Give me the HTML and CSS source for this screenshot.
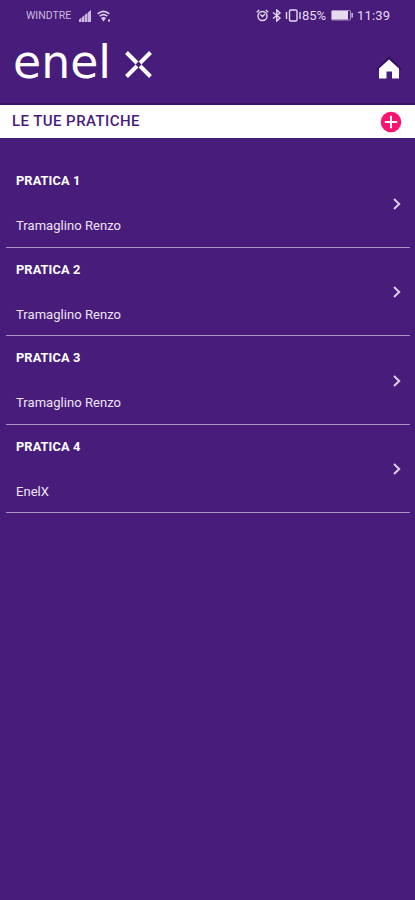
FILE: index.html
```html
<!DOCTYPE html>
<html lang="it">
<head>
<meta charset="utf-8">
<meta name="viewport" content="width=device-width">
<title>Le tue pratiche</title>
<link rel="stylesheet" href="styles.css">
</head>
<body>
<div class="status">
  <span class="carrier">WINDTRE</span>
  <svg class="signal" width="13" height="12" viewBox="0 0 13 12"><path d="M0 12V9.500L2.500 7.500V12zM3 12V7.200L5.500 5V12zM6 12V4.700L8.500 2.700V12zM9 12V2.300L12 0V12z"/></svg>
  <svg class="wifi" width="14" height="12" viewBox="0 0 14 12"><g fill="none" stroke="currentColor" stroke-width="1.6"><path d="M.7 3.800Q6.500-1 12.300 3.800M2.700 6.200Q6.500 3 10.300 6.200"/></g><path d="M4 8Q6.500 6 9 8L6.500 11.500zM11 9.500h2v2h-2z"/></svg>
  <span class="spacer"></span>
  <svg class="line alarm" width="13" height="13" viewBox="0 0 13 13"><circle cx="6.500" cy="7" r="4.500"/><path d="M.7 3.300L3.300 1M12.300 3.300L9.700 1M4.300 5.500L6.500 7.500L9 5"/></svg>
  <svg class="line bluetooth" width="10" height="13" viewBox="0 0 10 13"><path d="M1 3.500L8 9L4.800 12V1L8 4L1 9.500"/></svg>
  <svg class="line vibrate" width="17" height="13" viewBox="0 0 17 13"><rect x="4.500" y="1" width="7.500" height="11" rx="1.200"/><path d="M1.500 3v7M15 3v7"/></svg>
  <span class="percent">85%</span>
  <svg class="battery" width="23" height="11" viewBox="0 0 23 11"><rect x=".5" y=".5" width="19" height="9.500" rx="1" fill="none" stroke="currentColor" stroke-opacity=".6"/><path d="M1 1h16v8.500H1zM20.500 3h1.300v4.500h-1.300z"/></svg>
  <span class="clock">11:39</span>
</div>
<header class="brand">
  <svg class="logo" width="144" height="44" viewBox="0 0 144 44" role="img" aria-label="enel x">
    <text x="-1" y="38" textLength="98" lengthAdjust="spacingAndGlyphs">enel</text>
    <path class="mark" d="M112.500 12.500L123 23M136.500 12.500L126 23M112.500 36.500L123 26M136.500 36.500L126 26"/>
  </svg>
  <svg class="home" width="30" height="28" viewBox="0 0 30 28"><path class="roof" d="M3 16L15 3.500L27 16"/><path d="M15 5.500L25 14.500V24.500H18V17.500H12.500V24.500H5V14.500z"/></svg>
</header>
<div class="heading">
  <h1>LE TUE PRATICHE</h1>
  <svg class="add" width="22" height="22" viewBox="0 0 22 22"><circle cx="11" cy="11" r="10.300"/><path d="M11 4.800v12.400M4.800 11h12.400"/></svg>
</div>
<main class="list">
  <section class="item"><div><h2>PRATICA 1</h2><p>Tramaglino Renzo</p></div><svg class="chevron" width="10" height="12" viewBox="0 0 10 12"><path d="M2 1L7.200 6L2 11"/></svg></section>
  <section class="item"><div><h2>PRATICA 2</h2><p>Tramaglino Renzo</p></div><svg class="chevron" width="10" height="12" viewBox="0 0 10 12"><path d="M2 1L7.200 6L2 11"/></svg></section>
  <section class="item"><div><h2>PRATICA 3</h2><p>Tramaglino Renzo</p></div><svg class="chevron" width="10" height="12" viewBox="0 0 10 12"><path d="M2 1L7.200 6L2 11"/></svg></section>
  <section class="item"><div><h2>PRATICA 4</h2><p>EnelX</p></div><svg class="chevron" width="10" height="12" viewBox="0 0 10 12"><path d="M2 1L7.200 6L2 11"/></svg></section>
</main>
</body>
</html>
```
FILE: styles.css
```css
* { box-sizing: border-box; margin: 0; padding: 0; }
body {
  min-height: 900px;
  background: #481c7b;
  color: #fff;
  font-family: Roboto, "Liberation Sans", sans-serif;
}
svg { display: block; flex: none; fill: currentColor; }
.status {
  display: flex;
  align-items: center;
  height: 31px;
  padding: 0 24px 0 26px;
  color: #e6daf1;
  white-space: nowrap;
}
.carrier { width: 53px; font-size: 10.5px; color: #cbb9de; }
.signal { color: #cbb9de; margin-right: 5px; }
.wifi { color: #dccfea; }
.spacer { flex: 1; }
.line { fill: none; stroke: currentColor; stroke-width: 1.4; }
.bluetooth { margin-left: 3px; }
.vibrate { margin-left: 3px; }
.percent { width: 28px; font-size: 13px; }
.battery { margin-left: 1px; }
.clock { width: 34px; margin-left: 3px; font-size: 13px; letter-spacing: .2px; }
.brand {
  display: flex;
  justify-content: space-between;
  align-items: flex-start;
  height: 74px;
  padding: 9px 11px 0 14px;
  border-bottom: 2px solid #381466;
}
.logo { overflow: visible; }
.logo text { font-family: "DejaVu Sans", sans-serif; font-size: 46.5px; }
.mark { fill: none; stroke: #fff; stroke-width: 4; }
.home { margin-top: 14px; }
.roof { fill: none; stroke: #33105f; stroke-width: 2; }
.heading {
  display: flex;
  justify-content: space-between;
  align-items: center;
  height: 33px;
  padding: 0 13px 0 12px;
  background: #fff;
  color: #481c7b;
}
h1 { font-size: 15px; font-weight: 500; letter-spacing: .43px; line-height: 18px; margin-top: -1px; }
.add circle { fill: #f91472; }
.add path { fill: none; stroke: #fff; stroke-width: 2; }
.list { padding: 21px 5px 0 6px; }
.item {
  display: flex;
  justify-content: space-between;
  align-items: center;
  height: 88.5px;
  padding: 2px 8px 0 10px;
  border-bottom: 1.5px solid #a994c4;
}
h2 { font-size: 12.8px; font-weight: 700; line-height: 16px; letter-spacing: .1px; }
p { margin-top: 29px; font-size: 13px; line-height: 16px; letter-spacing: .05px; color: #ede4f5; }
.chevron { fill: none; stroke: #ddcfea; stroke-width: 2; }
```
